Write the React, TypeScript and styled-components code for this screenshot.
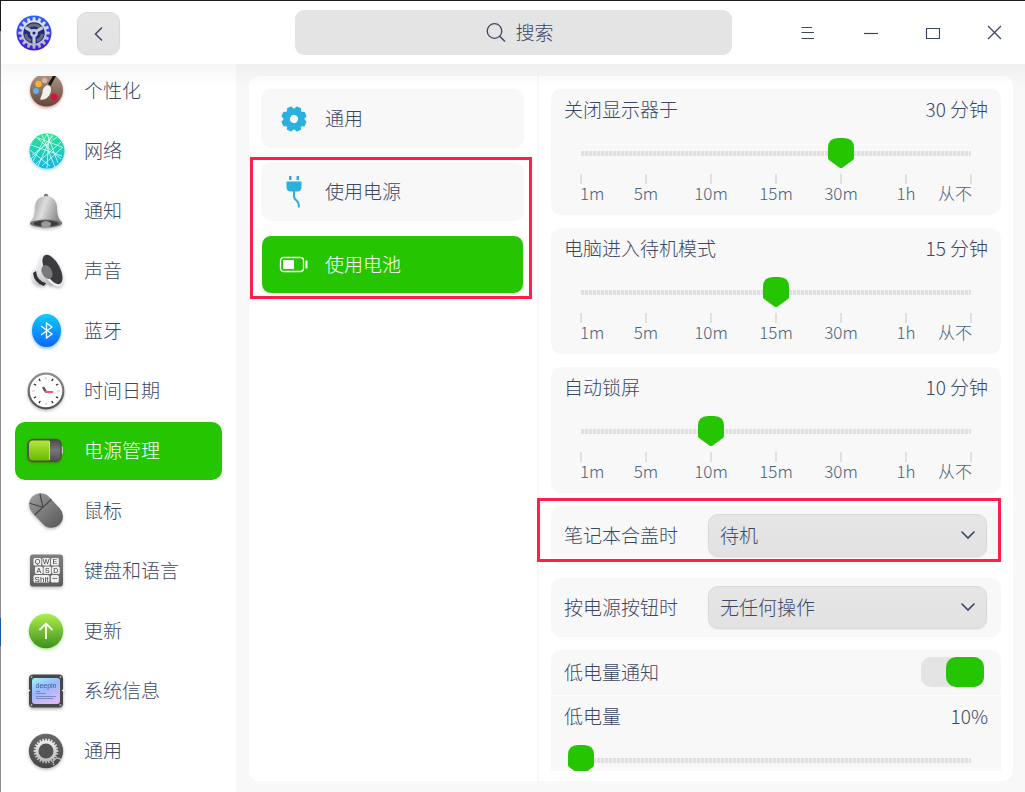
import React, { useState } from 'react';
import styled, { createGlobalStyle } from 'styled-components';

const green = '#25c502';
const ink = '#3c4765';
const blue = '#2cb1de';
const font = '"Noto Sans CJK SC", "Noto Sans", sans-serif';

const GlobalStyle = createGlobalStyle`
  *, *::before, *::after { box-sizing: border-box; }
  body { margin: 0; background: #fff; color: ${ink}; font-family: ${font}; font-weight: 300; font-size: 19px; line-height: 28px; }
  button, input, select { font: inherit; color: inherit; }
  ul { list-style: none; margin: 0; padding: 0; }
  svg { display: block; flex: none; }
`;

/* ---------- frame ---------- */

const Shell = styled.div`
  height: 100vh;
  min-height: 480px;
  display: flex;
  flex-direction: column;
  padding: 1px 0 0 1px;
  background: linear-gradient(#1d191c 31px, #8f8f93 31px, #8f8f93 618px, #1558a0 618px, #1558a0 646px, #8f8f93 646px);
`;

const Header = styled.header`
  position: relative;
  z-index: 1;
  flex: none;
  height: 63px;
  display: grid;
  grid-template-columns: 294px 1fr 293px;
  align-items: center;
  background: #fff;
  &::after {
    content: '';
    position: absolute;
    top: 100%;
    left: 0;
    right: 0;
    height: 24px;
    background: linear-gradient(rgba(0, 0, 0, 0.035), rgba(0, 0, 0, 0));
    pointer-events: none;
  }
`;

const HeaderStart = styled.div`
  display: flex;
  align-items: center;
  gap: 25px;
  padding-left: 15px;
`;

const BackButton = styled.button`
  width: 43px;
  height: 43px;
  margin-top: 2px;
  padding: 0;
  display: grid;
  place-items: center;
  border: 1px solid #d9d9d9;
  border-radius: 10px;
  background: linear-gradient(#e6e6e6, #e2e2e2);
  box-shadow: 0 1px 2px rgba(0, 0, 0, 0.06);
`;

const SearchBox = styled.label`
  height: 45px;
  display: flex;
  align-items: center;
  justify-content: center;
  gap: 10px;
  padding-left: 14px;
  border-radius: 9px;
  background: #e4e4e4;
`;

const SearchInput = styled.input`
  width: 40px;
  padding: 0 0 2px;
  border: 0;
  outline: 0;
  background: none;
  &::placeholder { color: ${ink}; opacity: 1; }
`;

const WindowControls = styled.div`
  display: flex;
  justify-content: flex-end;
`;

const WindowButton = styled.button`
  width: 62px;
  height: 62px;
  padding: 0;
  display: grid;
  place-items: center;
  border: 0;
  background: none;
`;

const Body = styled.div`
  flex: 1;
  min-height: 0;
  display: flex;
`;

/* ---------- sidebar ---------- */

const Sidebar = styled.nav`
  flex: none;
  width: 235px;
  padding: 12px 14px 0;
  background: #fff;
  display: flex;
`;

const SideScroll = styled.div`
  flex: 1;
  overflow: hidden;
`;

const SideList = styled.ul`
  margin-top: -14px;
  display: flex;
  flex-direction: column;
  gap: 2px;
`;

const SideLink = styled.a<{ $active?: boolean }>`
  height: 58px;
  display: flex;
  align-items: center;
  gap: 16px;
  padding-left: 9px;
  border-radius: 10px;
  color: ${p => (p.$active ? '#fff' : ink)};
  background: ${p => (p.$active ? green : 'transparent')};
  text-decoration: none;
`;

const ItemText = styled.span`
  padding-bottom: 2px;
`;

/* ---------- content ---------- */

const Main = styled.main`
  flex: 1;
  min-width: 0;
  display: flex;
  padding: 12px 12px 11px 13px;
  background: #f8f8f8;
`;

const Panel = styled.div`
  flex: 1;
  min-width: 0;
  display: grid;
  grid-template-columns: 290px 1fr;
  grid-template-rows: minmax(0, 1fr);
  border-radius: 10px;
  background: #fff;
`;

const Categories = styled.ul`
  padding: 13px 13px 0 12px;
  border-right: 2px solid #f8f8f8;
`;

const Category = styled.li`
  margin-bottom: 14px;
`;

const CategoryLink = styled.a<{ $active?: boolean }>`
  height: 59px;
  display: flex;
  align-items: center;
  gap: 16px;
  padding-left: 17px;
  border: 1px solid ${p => (p.$active ? '#fff' : '#f8f8f8')};
  border-radius: 10px;
  color: ${p => (p.$active ? '#fff' : ink)};
  background: ${p => (p.$active ? green : '#f8f8f8')};
  text-decoration: none;
`;

const Highlighted = styled.div`
  position: relative;
`;

const Highlight = styled.span<{ $inset: string }>`
  position: absolute;
  inset: ${p => p.$inset};
  border: 3px solid #ff1f4b;
  pointer-events: none;
`;

const Settings = styled.section`
  min-width: 0;
  padding: 13px 12px 10px;
  display: flex;
`;

const SettingsScroll = styled.div`
  flex: 1;
  min-width: 0;
  display: flex;
  flex-direction: column;
  gap: 13px;
  overflow: hidden;
  margin-left: -16px;
  padding-left: 16px;
`;

const Card = styled.div`
  position: relative;
  flex: none;
  border-radius: 10px;
  background: #f8f8f8;
`;

const CardLine = styled.div<{ $divided?: boolean }>`
  height: ${p => (p.$divided ? 46 : 42)}px;
  display: flex;
  align-items: center;
  justify-content: space-between;
  padding: 0 13px 2px;
  border-bottom: ${p => (p.$divided ? '1px solid #fff' : '0')};
`;

const SliderArea = styled.div`
  padding: 7px 17px 13px;
`;

const Range = styled.input`
  appearance: none;
  display: block;
  width: 100%;
  height: 30px;
  margin: 0;
  background: repeating-linear-gradient(90deg, #e0e0e0 0 3px, #f3f3f3 3px 4px) no-repeat 13px center / calc(100% - 26px) 5px;
  &::-webkit-slider-thumb {
    appearance: none;
    width: 26px;
    height: 30px;
    border: 0;
    background: ${green};
    clip-path: path('M0 10 Q0 0 10 0 H16 Q26 0 26 10 V20 Q26 21 25 22 L14 30 H12 L1 22 Q0 21 0 20 Z');
  }
`;

const Ticks = styled.ul`
  display: flex;
  justify-content: space-between;
  margin: 6px 12px 0;
`;

const Tick = styled.li<{ $align: string }>`
  width: 2px;
  display: flex;
  flex-direction: column;
  align-items: ${p => p.$align};
  font-size: 17px;
  line-height: 18px;
  white-space: nowrap;
  color: #48607a;
  &::before {
    content: '';
    width: 2px;
    height: 10px;
    background: #e0e0e0;
  }
`;

const SelectRow = styled.div`
  display: grid;
  grid-template-columns: 144px 1fr;
  align-items: center;
  padding: 8px 14px 8px 13px;
`;

const RowLabel = styled.label`
  padding-bottom: 2px;
`;

const SelectWrap = styled.div`
  position: relative;
`;

const Select = styled.select`
  appearance: none;
  display: block;
  width: 100%;
  height: 43px;
  padding: 0 40px 2px 11px;
  border: 1px solid #d9d9d9;
  border-radius: 10px;
  background: linear-gradient(#e6e6e6, #e2e2e2);
  box-shadow: 0 1px 2px rgba(0, 0, 0, 0.06);
`;

const Chevron = styled.svg`
  position: absolute;
  right: 11px;
  top: 13px;
  pointer-events: none;
`;

const Toggle = styled.input`
  appearance: none;
  width: 63px;
  height: 30px;
  margin: 0 4px 0 0;
  border-radius: 10px;
  background: #e4e4e4;
  &::before {
    content: '';
    display: block;
    width: 38px;
    height: 30px;
    border-radius: 10px;
    background: #c4c4c4;
  }
  &:checked::before {
    margin-left: auto;
    background: ${green};
  }
`;

/* ---------- icons ---------- */

function gearPath(cx: number, cy: number, teeth: number, outer: number, inner: number) {
  const points: string[] = [];
  const step = (Math.PI * 2) / teeth;
  for (let i = 0; i < teeth; i++) {
    const a = i * step - Math.PI / 2;
    [[-0.32, inner], [-0.2, outer], [0.2, outer], [0.32, inner]].forEach(([k, r]) => {
      points.push(`${(cx + r * Math.cos(a + k * step)).toFixed(2)} ${(cy + r * Math.sin(a + k * step)).toFixed(2)}`);
    });
  }
  return `M${points.join('L')}Z`;
}

const Icon = ({ children, shadow }: { children: React.ReactNode; shadow?: string }) => (
  <svg width="44" height="44" viewBox="-4 -4 44 44" aria-hidden="true">
    <defs>
      {shadow && (
        <filter id={`s${shadow.slice(1)}`} x="-30%" y="-30%" width="160%" height="160%">
          <feDropShadow dx="0" dy="1.5" stdDeviation="1.5" floodColor={shadow} floodOpacity="0.5" />
        </filter>
      )}
    </defs>
    <g filter={shadow ? `url(#s${shadow.slice(1)})` : undefined}>{children}</g>
  </svg>
);

const Grad = ({ id, stops, x2 = 0, y2 = 1 }: { id: string; stops: string[]; x2?: number; y2?: number }) => (
  <linearGradient id={id} x1="0" y1="0" x2={x2} y2={y2}>
    {stops.map((c, i) => <stop key={i} offset={i / (stops.length - 1)} stopColor={c} />)}
  </linearGradient>
);

const Logo = () => (
  <svg width="36" height="36" viewBox="0 0 37 37" aria-hidden="true">
    <Grad id="lg" stops={['#2a63ff', '#4a16d8']} />
    <Grad id="lm" stops={['#e6eaf4', '#aab2cc']} />
    <circle cx="18.500" cy="18.500" r="18" fill="url(#lg)" />
    <path d={gearPath(18.5, 18.5, 16, 16.2, 13)} fill="url(#lm)" />
    <circle cx="18.500" cy="18.500" r="11" fill="#262c70" />
    <path d="M11.200 14.500A8.400 8.400 0 0 1 25.800 14.500M27 19.500A8.400 8.400 0 0 1 21.500 26.400M15.500 26.400A8.400 8.400 0 0 1 10 19.500" fill="none" stroke="#666c80" strokeWidth="3" />
    <path d="M18.500 19V29.500M18.500 18L9.500 13M18.500 18L27.500 13" stroke="#c3cae0" strokeWidth="3.200" />
    <circle cx="18.500" cy="18.500" r="4" fill="#c3cae0" />
    <circle cx="18.500" cy="18.500" r="1.600" fill="#22247c" />
  </svg>
);

const Palette = () => (
  <Icon shadow="#b0401c">
    <Grad id="pa" stops={['#b39a86', '#63463a']} />
    <circle cx="18.500" cy="17" r="16.500" fill="url(#pa)" />
    <circle cx="10.500" cy="11" r="3.200" fill="#f9b233" />
    <circle cx="8" cy="18" r="3" fill="#5cb0f4" />
    <circle cx="16.500" cy="7.500" r="2.800" fill="#d6b7a4" />
    <circle cx="26" cy="24" r="3.400" fill="#dc1140" />
    <path d="M25.500 2L20 11L22.500 13L28.500 2Z" fill="#181818" />
    <path d="M19 12Q14 15 14.500 20L12 26.500Q19 27.500 22 21Q24 16 22 13Z" fill="#f4f1ed" />
  </Icon>
);

const Network = () => (
  <Icon shadow="#28b8f4">
    <Grad id="ne" stops={['#2ce58e', '#17b4e6']} />
    <circle cx="19" cy="18" r="17.500" fill="url(#ne)" />
    <g stroke="#dbfff5" strokeWidth="0.800" fill="none">
      <path d="M19 1L5 28M19 1L30 30M8 4L33 26M29 4L4 22M3 12L34 23M24 2L10 33M14 2L27 34M2 17L22 33M35 14L14 33M33 9L8 31M10 5L34 14M3 26L25 3M21 2L19 35" />
    </g>
  </Icon>
);

const Bell = () => (
  <Icon shadow="#777777">
    <Grad id="be" stops={['#888888', '#dedede', '#8c8c8c']} x2={1} y2={0.3} />
    <circle cx="18" cy="3" r="2.200" fill="#777" />
    <path d="M7 16Q7 4 18 3Q29 4 29 16Q29 25 34 29V31H2V29Q7 25 7 16Z" fill="url(#be)" />
    <ellipse cx="18" cy="30.500" rx="16" ry="4" fill="#707070" />
    <ellipse cx="18" cy="30.500" rx="12.500" ry="3" fill="#3b3b3b" />
    <path d="M13 30Q18 26 23 30Q23 35 18 35Q13 35 13 30Z" fill="#989898" />
  </Icon>
);

const Speaker = () => (
  <Icon shadow="#777778">
    <Grad id="sp" stops={['#f8f8f8', '#aeb0b7']} x2={1} />
    <path d="M5 18Q2 27 8 31Q12 34 18 32L14 14Q8 12 5 18Z" fill="url(#sp)" />
    <path d="M8 18Q9 28 18 30L16 33Q6 30 5 20Z" fill="#333" />
    <path d="M15 1Q8 10 11 21Q16 31 25 33Z" fill="url(#sp)" />
    <ellipse cx="24" cy="17" rx="9" ry="18" transform="rotate(-28 24 17)" fill="#eeeeef" />
    <ellipse cx="24.500" cy="16.500" rx="7.500" ry="16.200" transform="rotate(-28 24.500 16.500)" fill="#3b3b3d" />
    <ellipse cx="19" cy="19" rx="5" ry="7.500" transform="rotate(-28 19 19)" fill="#77797d" />
  </Icon>
);

const Bluetooth = () => (
  <Icon shadow="#0c86ff">
    <Grad id="bl" stops={['#12ccfb', '#0966ff']} />
    <ellipse cx="18.500" cy="17.500" rx="14.500" ry="16.500" fill="url(#bl)" />
    <path d="M13 13L24 21L18.500 25V10L24 14L13 22" fill="none" stroke="#fff" strokeWidth="1.300" />
  </Icon>
);

const ClockIcon = () => (
  <Icon shadow="#777779">
    <Grad id="ck" stops={['#919191', '#505050']} />
    <circle cx="18" cy="18" r="17.300" fill="#fff" stroke="url(#ck)" strokeWidth="2.200" />
    {Array.from({ length: 12 }, (_, i) => (
      <path key={i} d="M18 4V6.500" stroke={i % 3 ? '#222' : '#ccc'} strokeWidth="1.300" transform={`rotate(${i * 30} 18 18)`} />
    ))}
    <path d="M18 19L15 14" stroke="#555" strokeWidth="2.400" />
    <path d="M17 19H25" stroke="#f45a56" strokeWidth="2" />
  </Icon>
);

const BatteryIcon = () => (
  <Icon shadow="#4d7000">
    <Grad id="ba" stops={['#b3e63c', '#68ba00']} />
    <Grad id="bb" stops={['#4b4b4b', '#777777', '#4d4d4d']} />
    <rect x="31" y="13" width="4" height="8" rx="1.500" fill="#ccc" />
    <rect x="0" y="6.500" width="33" height="22" rx="5" fill="url(#bb)" stroke="#4d5137" strokeWidth="1.500" />
    <path d="M5 7.500H21V27.500H5Q1 27.500 1 23.500V11.500Q1 7.500 5 7.500Z" fill="url(#ba)" />
    <path d="M21.500 8V27" stroke="#c5ed54" />
  </Icon>
);

const MouseIcon = () => (
  <Icon shadow="#777776">
    <Grad id="mo" stops={['#989898', '#5d5d5d']} />
    <g transform="rotate(-43 18 17.500)">
      <rect x="6.500" y="-2" width="23" height="39" rx="11.500" fill="url(#mo)" />
      <path d="M6.500 13H29.500M18 13L11 1M18 13L25 1" stroke="#444" strokeWidth="1.200" />
    </g>
  </Icon>
);

const KeyboardIcon = () => (
  <Icon shadow="#777775">
    <Grad id="kb" stops={['#808080', '#5c5c5c']} />
    <rect x="2" y="1.500" width="33" height="32" rx="3" fill="url(#kb)" />
    {[[5.5, 5, 'Q'], [14.2, 5, 'W'], [23, 5, 'E'], [7, 13.5, 'A'], [15.5, 13.5, 'S'], [24, 13.5, 'D']].map(([x, y, t]) => (
      <g key={t as string}>
        <rect x={x} y={y} width="7.800" height="7.500" rx="1.500" fill="#f0f0f0" />
        <text x={(x as number) + 3.9} y={(y as number) + 6.4} textAnchor="middle" fontFamily="Liberation Sans" fontWeight="400" fontSize="7" fill="#333">{t}</text>
      </g>
    ))}
    <rect x="5.500" y="22" width="16" height="7.500" rx="1.500" fill="#f0f0f0" />
    <text x="13.500" y="28.500" textAnchor="middle" fontFamily="Liberation Sans" fontWeight="400" fontSize="8" fill="#333">Shit</text>
    <rect x="22.800" y="22" width="8" height="7.500" rx="1.500" fill="#f0f0f0" />
    <path d="M24.500 25.500H29" stroke="#777" />
  </Icon>
);

const UpdateIcon = () => (
  <Icon shadow="#5fd22c">
    <Grad id="up" stops={['#adef4b', '#3c8f20']} />
    <circle cx="18" cy="18" r="17.200" fill="url(#up)" />
    <path d="M18 26V11M11.500 17L18 10.500L24.500 17" fill="none" stroke="#fff" strokeWidth="1.800" />
  </Icon>
);

const InfoIcon = () => (
  <Icon shadow="#555555">
    <Grad id="in" stops={['#9ff2fb', '#99b8fa', '#d8b7fa']} x2={0.5} />
    <rect x="1" y="1.500" width="34" height="33" rx="4" fill="#464646" />
    <rect x="4" y="5" width="28" height="26" rx="3" fill="url(#in)" />
    <path d="M0 16L2.500 17.500L0 19ZM36 16L33.500 17.500L36 19Z" fill="#fff" />
    <g fill="#aaa">
      <circle cx="3.500" cy="4" r="1" /><circle cx="32.500" cy="4" r="1" />
      <circle cx="3.500" cy="32" r="1" /><circle cx="32.500" cy="32" r="1" />
    </g>
    <text x="18" y="15" textAnchor="middle" fontFamily="Liberation Sans" fontWeight="400" fontSize="7" fill="#395a91">deepin</text>
    <path d="M8 18.500H12M8 20.500H18M8 23.500H28M8 25.500H25" stroke="#7083b4" strokeWidth="0.900" />
  </Icon>
);

const GeneralIcon = () => (
  <Icon shadow="#777774">
    <Grad id="ge" stops={['#686868', '#474747']} />
    <Grad id="gf" stops={['#f5f5f5', '#b4b4b4']} />
    <circle cx="18" cy="18" r="17.200" fill="url(#ge)" />
    <path d={gearPath(18, 18, 24, 12.5, 10.5)} fill="url(#gf)" />
    <circle cx="18" cy="18" r="7.500" fill="#525252" />
    <path d="M26 32A4 4 0 1 1 33 27" fill="none" stroke="#ccc" strokeWidth="1.500" strokeDasharray="1.500 0.500" />
  </Icon>
);

const sideItems = [
  { label: '个性化', icon: <Palette /> },
  { label: '网络', icon: <Network /> },
  { label: '通知', icon: <Bell /> },
  { label: '声音', icon: <Speaker /> },
  { label: '蓝牙', icon: <Bluetooth /> },
  { label: '时间日期', icon: <ClockIcon /> },
  { label: '电源管理', icon: <BatteryIcon />, active: true },
  { label: '鼠标', icon: <MouseIcon /> },
  { label: '键盘和语言', icon: <KeyboardIcon /> },
  { label: '更新', icon: <UpdateIcon /> },
  { label: '系统信息', icon: <InfoIcon /> },
  { label: '通用', icon: <GeneralIcon /> },
];

const GearGlyph = () => (
  <svg width="30" height="30" viewBox="0 0 30 30" aria-hidden="true">
    <path fillRule="evenodd" fill={blue} stroke={blue} strokeWidth="2" strokeLinejoin="round" d={`${gearPath(15, 15, 8, 11.8, 9.8)}M15 10a5 5 0 1 0 0 10a5 5 0 1 0 0-10Z`} transform="rotate(22.500 15 15)" />
  </svg>
);

const PlugGlyph = () => (
  <svg width="30" height="34" viewBox="0 0 30 34" aria-hidden="true">
    <path d="M10 1h2.500v4H10ZM17.500 1H20v4h-2.500ZM7.500 6.500H22.500V12Q22.500 16.500 18 16.500H12Q7.500 16.500 7.500 12Z" fill={blue} />
    <path d="M15 16V21Q15 24 18 26Q20 28 20 32.500" fill="none" stroke={blue} strokeWidth="2" />
  </svg>
);

const CellGlyph = () => (
  <svg width="30" height="18" viewBox="0 0 30 18" aria-hidden="true">
    <rect x="1.500" y="1.500" width="23" height="14" rx="3" fill="none" stroke="#fff" strokeWidth="1.300" />
    <rect x="4" y="4" width="11" height="9" fill="#fff" />
    <path d="M27.500 4.500V12.500" stroke="#fff" strokeWidth="2" />
  </svg>
);

/* ---------- settings ---------- */

const minutes = ['1m', '5m', '10m', '15m', '30m', '1h', '从不'];
const amounts = ['1 分钟', '5 分钟', '10 分钟', '15 分钟', '30 分钟', '1 小时', '从不'];

function TimeoutCard({ id, label, initial }: { id: string; label: string; initial: number }) {
  const [value, setValue] = useState(initial);
  return (
    <Card>
      <CardLine>
        <label htmlFor={id}>{label}</label>
        <output htmlFor={id}>{amounts[value]}</output>
      </CardLine>
      <SliderArea>
        <Range id={id} type="range" min={0} max={6} value={value} onChange={e => setValue(Number(e.target.value))} />
        <Ticks>
          {minutes.map((m, i) => (
            <Tick key={m} $align={i === 0 ? 'flex-start' : i === 6 ? 'flex-end' : 'center'}>{m}</Tick>
          ))}
        </Ticks>
      </SliderArea>
    </Card>
  );
}

function ActionCard({ id, label, initial, marked }: { id: string; label: string; initial: string; marked?: boolean }) {
  return (
    <Card>
      <SelectRow>
        <RowLabel htmlFor={id}>{label}</RowLabel>
        <SelectWrap>
          <Select id={id} defaultValue={initial}>
            <option>关机</option>
            <option>待机</option>
            <option>关闭显示器</option>
            <option>无任何操作</option>
          </Select>
          <Chevron width="16" height="16" viewBox="0 0 16 16" aria-hidden="true">
            <path d="M1.500 4.500L8 11L14.500 4.500" fill="none" stroke={ink} strokeWidth="1.600" />
          </Chevron>
        </SelectWrap>
      </SelectRow>
      {marked && <Highlight $inset="-8px 0 3px -14px" />}
    </Card>
  );
}

export default function App() {
  const [notify, setNotify] = useState(true);
  const [level, setLevel] = useState(10);
  return (
    <Shell>
      <GlobalStyle />
      <Header>
        <HeaderStart>
          <Logo />
          <BackButton type="button" aria-label="返回">
            <svg width="18" height="18" viewBox="0 0 18 18"><path d="M12 2.500L5.500 9L12 15.500" fill="none" stroke={ink} strokeWidth="1.500" /></svg>
          </BackButton>
        </HeaderStart>
        <SearchBox>
          <svg width="20" height="20" viewBox="0 0 20 20" aria-hidden="true">
            <circle cx="8.500" cy="8" r="7.300" fill="none" stroke={ink} strokeWidth="1.300" />
            <path d="M13.500 13L19 18.500" stroke={ink} strokeWidth="1.500" />
          </svg>
          <SearchInput type="text" placeholder="搜索" aria-label="搜索" />
        </SearchBox>
        <WindowControls>
          <WindowButton type="button" aria-label="菜单">
            <svg width="16" height="16" viewBox="0 0 16 16"><path d="M1.500 2.500H12M1.500 7.500H14M1.500 13.500H14" stroke={ink} strokeWidth="1.200" /></svg>
          </WindowButton>
          <WindowButton type="button" aria-label="最小化">
            <svg width="16" height="16" viewBox="0 0 16 16"><path d="M2 8.500H16" stroke={ink} strokeWidth="1.200" /></svg>
          </WindowButton>
          <WindowButton type="button" aria-label="最大化">
            <svg width="16" height="16" viewBox="0 0 16 16"><path d="M2.500 3.500H15.500V13.500H2.500Z" fill="none" stroke={ink} strokeWidth="1.200" /></svg>
          </WindowButton>
          <WindowButton type="button" aria-label="关闭">
            <svg width="16" height="16" viewBox="0 0 16 16"><path d="M2 1L15 14M15 1L2 14" stroke={ink} strokeWidth="1.300" /></svg>
          </WindowButton>
        </WindowControls>
      </Header>
      <Body>
        <Sidebar>
          <SideScroll>
            <SideList>
              {sideItems.map(item => (
                <li key={item.label}>
                  <SideLink href="#" $active={item.active}>
                    {item.icon}
                    <ItemText>{item.label}</ItemText>
                  </SideLink>
                </li>
              ))}
            </SideList>
          </SideScroll>
        </Sidebar>
        <Main>
          <Panel>
            <Categories>
              <Category>
                <CategoryLink href="#"><GearGlyph /><ItemText>通用</ItemText></CategoryLink>
              </Category>
              <Highlighted as="li">
                <ul>
                  <Category>
                    <CategoryLink href="#"><PlugGlyph /><ItemText>使用电源</ItemText></CategoryLink>
                  </Category>
                  <li>
                    <CategoryLink href="#" $active><CellGlyph /><ItemText>使用电池</ItemText></CategoryLink>
                  </li>
                </ul>
                <Highlight $inset="-5px -8px -5px -11px" />
              </Highlighted>
            </Categories>
            <Settings>
              <SettingsScroll>
                <TimeoutCard id="screen-off" label="关闭显示器于" initial={4} />
                <TimeoutCard id="suspend" label="电脑进入待机模式" initial={3} />
                <TimeoutCard id="lock" label="自动锁屏" initial={2} />
                <ActionCard id="lid" label="笔记本合盖时" initial="待机" marked />
                <ActionCard id="power-button" label="按电源按钮时" initial="无任何操作" />
                <Card>
                  <CardLine $divided>
                    <label htmlFor="low-notify">低电量通知</label>
                    <Toggle id="low-notify" type="checkbox" checked={notify} onChange={e => setNotify(e.target.checked)} />
                  </CardLine>
                  <CardLine>
                    <label htmlFor="low-level">低电量</label>
                    <output htmlFor="low-level">{level}%</output>
                  </CardLine>
                  <SliderArea>
                    <Range id="low-level" type="range" min={10} max={25} value={level} onChange={e => setLevel(Number(e.target.value))} />
                  </SliderArea>
                </Card>
              </SettingsScroll>
            </Settings>
          </Panel>
        </Main>
      </Body>
    </Shell>
  );
}
